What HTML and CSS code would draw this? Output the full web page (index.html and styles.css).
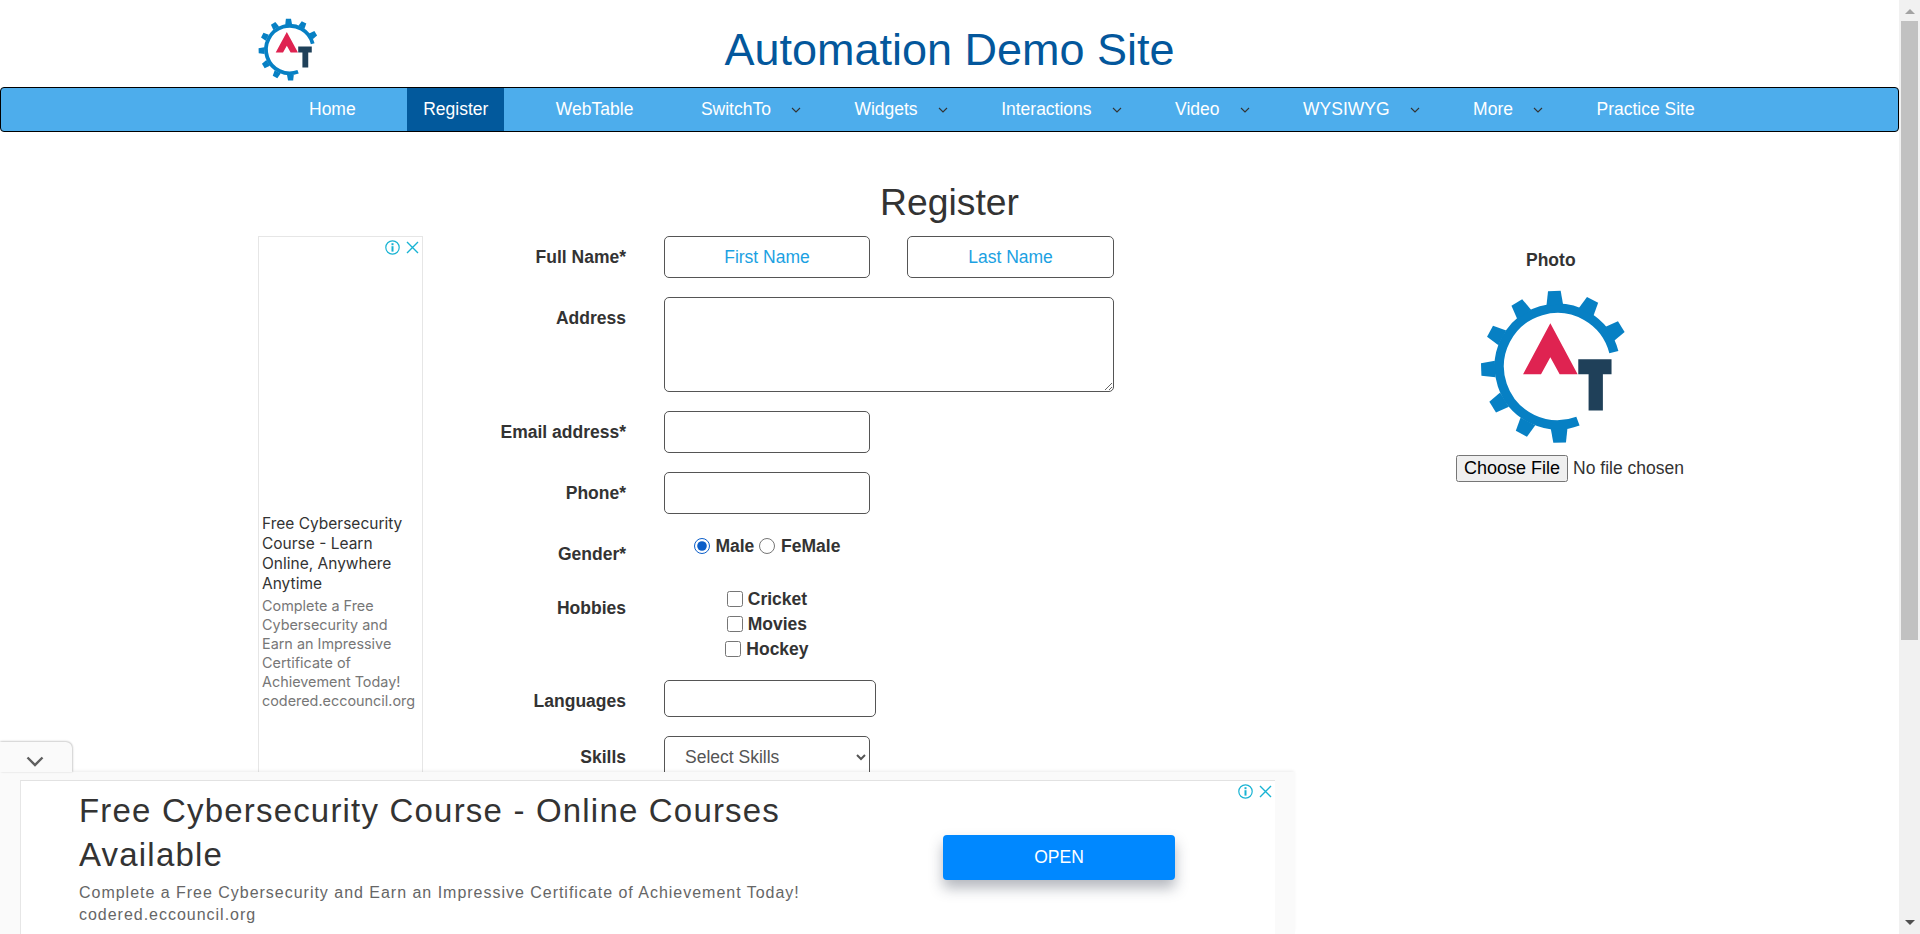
FILE: index.html
```html
<!DOCTYPE html>
<html lang="en">
<head>
<meta charset="utf-8">
<title>Register</title>
<link rel="stylesheet" href="styles.css">
</head>
<body>
<svg class="defs" width="0" height="0" aria-hidden="true">
  <symbol id="gear" viewBox="170 150 450 460">
    <path d="M473 544 A175 175 0 1 1 581 337" fill="none" stroke="#0780c4" stroke-width="28"/>
    <g fill="#0780c4">
      <polygon transform="translate(410 381) rotate(-2)" points="-25,-186 -19,-228 19,-228 25,-186"/>
      <polygon transform="translate(410 381) rotate(28)" points="-25,-186 -19,-228 19,-228 25,-186"/>
      <polygon transform="translate(410 381) rotate(58)" points="-25,-186 -19,-228 19,-228 25,-186"/>
      <polygon transform="translate(410 381) rotate(-32)" points="-25,-186 -19,-228 19,-228 25,-186"/>
      <polygon transform="translate(410 381) rotate(-62)" points="-25,-186 -19,-228 19,-228 25,-186"/>
      <polygon transform="translate(410 381) rotate(-92)" points="-25,-186 -19,-228 19,-228 25,-186"/>
      <polygon transform="translate(410 381) rotate(-122)" points="-25,-186 -19,-228 19,-228 25,-186"/>
      <polygon transform="translate(410 381) rotate(-152)" points="-25,-186 -19,-228 19,-228 25,-186"/>
      <polygon transform="translate(410 381) rotate(178)" points="-25,-186 -19,-228 19,-228 25,-186"/>
    </g>
    <polygon fill="#df2351" points="390,250 308,403 362,403 390,352 418,403 472,403"/>
    <polygon fill="#1f4059" points="474,358 574,358 574,403 548,403 548,512 505,512 505,403 474,403"/>
  </symbol>
  <symbol id="adinfo" viewBox="0 0 15 15">
    <circle cx="7.5" cy="7.5" r="6.7" fill="none" stroke="#18b3d3" stroke-width="1.2"/>
    <rect x="6.5" y="3.2" width="2" height="2" fill="#18b3d3"/>
    <rect x="6.5" y="6.2" width="2" height="5.4" fill="#18b3d3"/>
  </symbol>
  <symbol id="adclose" viewBox="0 0 15 15">
    <path d="M2 2 L13 13 M13 2 L2 13" fill="none" stroke="#18b3d3" stroke-width="1.4"/>
  </symbol>
  <symbol id="caret" viewBox="0 0 10 6">
    <path d="M1 1 L5 5 L9 1" fill="none" stroke="#333" stroke-width="1.1"/>
  </symbol>
</svg>

<div class="window">
  <div class="page">
    <header class="site-header">
      <div class="logo-cell"><svg class="logo-small"><use href="#gear"/></svg></div>
      <h1 class="site-title">Automation Demo Site</h1>
      <div></div>
    </header>

    <nav class="navbar">
      <a class="nav-item">Home</a>
      <a class="nav-item nav-active">Register</a>
      <a class="nav-item">WebTable</a>
      <a class="nav-item">SwitchTo<svg class="caret"><use href="#caret"/></svg></a>
      <a class="nav-item">Widgets<svg class="caret"><use href="#caret"/></svg></a>
      <a class="nav-item">Interactions<svg class="caret"><use href="#caret"/></svg></a>
      <a class="nav-item">Video<svg class="caret"><use href="#caret"/></svg></a>
      <a class="nav-item">WYSIWYG<svg class="caret"><use href="#caret"/></svg></a>
      <a class="nav-item">More<svg class="caret"><use href="#caret"/></svg></a>
      <a class="nav-item">Practice Site</a>
    </nav>

    <h2 class="page-title">Register</h2>

    <div class="content">
      <aside class="side-ad">
        <div class="ad-icons">
          <svg class="ad-icon"><use href="#adinfo"/></svg>
          <svg class="ad-icon"><use href="#adclose"/></svg>
        </div>
        <div class="side-ad-head">Free Cybersecurity Course - Learn Online, Anywhere Anytime</div>
        <div class="side-ad-body side-ad-desc">Complete a Free Cybersecurity and Earn an Impressive Certificate of Achievement Today!</div>
        <div class="side-ad-body">codered.eccouncil.org</div>
      </aside>

      <form class="reg-form">
        <div class="row">
          <label class="row-label">Full Name*</label>
          <div class="pair">
            <input class="field field-half field-first" type="text" placeholder="First Name">
            <input class="field field-half field-second" type="text" placeholder="Last Name">
          </div>
        </div>
        <div class="row">
          <label class="row-label">Address</label>
          <textarea class="field field-area"></textarea>
        </div>
        <div class="row">
          <label class="row-label">Email address*</label>
          <input class="field field-half" type="email">
        </div>
        <div class="row">
          <label class="row-label">Phone*</label>
          <input class="field field-half" type="tel">
        </div>
        <div class="row row-gender">
          <label class="row-label">Gender*</label>
          <div class="choices choices-gender">
            <label class="choice"><input class="mark mark-radio" type="radio" name="gender" checked> Male</label>
            <label class="choice"><input class="mark mark-radio" type="radio" name="gender"> FeMale</label>
          </div>
        </div>
        <div class="row row-hobbies">
          <label class="row-label">Hobbies</label>
          <div class="choices">
            <div class="choice-line"><label class="choice"><input class="mark" type="checkbox"> Cricket</label></div>
            <div class="choice-line"><label class="choice"><input class="mark" type="checkbox"> Movies</label></div>
            <div class="choice-line"><label class="choice"><input class="mark" type="checkbox"> Hockey</label></div>
          </div>
        </div>
        <div class="row">
          <label class="row-label">Languages</label>
          <input class="field field-lang" type="text">
        </div>
        <div class="row">
          <label class="row-label">Skills</label>
          <select class="field field-half field-select"><option>Select Skills</option></select>
        </div>
      </form>

      <section class="photo">
        <div class="photo-label">Photo</div>
        <svg class="logo-large"><use href="#gear"/></svg>
        <input class="file" type="file">
      </section>
    </div>
  </div>

  <aside class="scrollbar">
    <span class="scroll-up"></span>
    <span class="scroll-thumb"></span>
    <span class="scroll-track"></span>
    <span class="scroll-down"></span>
  </aside>

  <div class="anchor-ad">
    <div class="anchor-tab"><svg class="anchor-chevron" viewBox="0 0 18 11"><path d="M1.5 1.5 L9 9 L16.5 1.5" fill="none" stroke="#5f5f5f" stroke-width="2.4"/></svg></div>
    <div class="anchor-inner">
      <div class="ad-icons ad-icons-anchor">
        <svg class="ad-icon"><use href="#adinfo"/></svg>
        <svg class="ad-icon"><use href="#adclose"/></svg>
      </div>
      <div class="anchor-copy">
        <div class="anchor-head">Free Cybersecurity Course - Online Courses Available</div>
        <div class="anchor-body">Complete a Free Cybersecurity and Earn an Impressive Certificate of Achievement Today!</div>
        <div class="anchor-body">codered.eccouncil.org</div>
      </div>
      <div class="anchor-action"><button class="open-btn" type="button">OPEN</button></div>
    </div>
  </div>
</div>
</body>
</html>
```
FILE: styles.css
```css
* { box-sizing: border-box; }
html, body { margin: 0; height: 934px; overflow: hidden; background: #fff; }
body { font-family: "Liberation Sans", Arial, sans-serif; color: #333; }
.defs { position: absolute; }

.window { position: relative; display: flex; height: 934px; }
.page { flex: 1; min-width: 0; height: 934px; overflow: hidden; }

/* header */
.site-header { display: grid; grid-template-columns: 1fr auto 1fr; align-items: center; height: 87px; }
.logo-cell { padding-left: 257px; }
.logo-small { display: block; width: 61px; height: 63px; margin-top: 12px; }
.site-title { margin: 0; font-size: 45px; font-weight: 400; color: #03579c; line-height: 1; padding-top: 12px; }

/* nav */
.navbar { display: flex; gap: 35.5px; height: 45px; padding-left: 292px; border: 1px solid #000; border-radius: 4px; background: #4dadec; }
.nav-item { display: flex; align-items: center; padding: 0 16px; font-size: 17.5px; color: #fff; }
.nav-active { background: #02599c; }
.caret { width: 10px; height: 6px; margin-left: 20px; margin-right: -16px; margin-top: 1px; }
.nav-item:has(.caret) { padding-right: 18px; }

/* heading */
.page-title { margin: 0; height: 104px; padding-top: 46px; text-align: center; font-size: 37.3px; line-height: 48px; font-weight: 400; }

/* content */
.content { display: flex; align-items: flex-start; padding-left: 258px; }

.side-ad { position: relative; flex: none; width: 165px; height: 600px; padding: 277px 3px 0 3px; border: 1px solid #e6e6e6; border-bottom: 0; }
.ad-icons { position: absolute; top: 3px; right: 2px; display: flex; gap: 5px; }
.ad-icon { display: block; width: 15px; height: 15px; }
.side-ad-head { font-family: Inter, sans-serif; font-size: 15.5px; line-height: 20px; color: #333; }
.side-ad-body { font-family: Inter, sans-serif; font-size: 14.4px; line-height: 19px; color: #777; }
.side-ad-desc { margin-top: 2px; }

/* form */
.reg-form { flex: none; width: 720px; }
.row { display: flex; align-items: flex-start; margin-bottom: 19px; }
.row-label { flex: none; width: 203px; margin-right: 38px; padding-top: 9px; text-align: right; font-size: 17.5px; line-height: 24px; font-weight: 700; color: #333; }
.pair { display: flex; gap: 37px; }
.field { display: block; margin: 0; border: 1px solid #555; border-radius: 5px; background: #fff; font-family: inherit; font-size: 17.5px; color: #555; }
.field-half { width: 206px; height: 42px; }
.field-second { width: 207px; }
.field-first, .field-second { text-align: center; }
.field::placeholder { color: #1ba1e2; opacity: 1; }
.field-area { width: 450px; height: 95px; }
.field-lang { width: 212px; height: 37px; }
.field-select { padding-left: 16px; }

.row-gender { height: 35px; }
.row-hobbies { height: 74px; }
.choices { flex: none; width: 206px; text-align: center; font-size: 17.5px; font-weight: 700; color: #333; }
.choices-gender { line-height: 24px; padding-top: 1px; }
.choice-line { height: 25px; line-height: 25px; }
.mark { margin: 0; width: 16px; height: 16px; vertical-align: -2px; accent-color: #0b5ec9; }
.mark-radio { margin-right: 1px; }

/* photo */
.photo { flex: none; display: flex; flex-direction: column; align-items: flex-start; margin-left: 154px; padding-top: 14px; width: 500px; }
.photo-label { margin-left: 229px; font-size: 17.5px; font-weight: 700; line-height: 20px; color: #333; }
.logo-large { display: block; width: 150px; height: 153px; margin: 20px 0 0 180px; }
.file { margin: 12px 0 0 159px; font-family: inherit; font-size: 17.5px; color: #333; }
.file::file-selector-button { font-size: 18px; margin-right: 5px; }

/* scrollbar */
.scrollbar { flex: none; display: flex; flex-direction: column; align-items: center; width: 21px; height: 934px; background: #f1f1f1; }
.scroll-up { flex: none; width: 0; height: 0; margin: 9px 0 5px; border-left: 5px solid transparent; border-right: 5px solid transparent; border-bottom: 5px solid #a3a3a3; }
.scroll-thumb { flex: none; width: 17px; height: 619px; margin-top: 2px; background: #c1c1c1; }
.scroll-track { flex: 1; }
.scroll-down { flex: none; width: 0; height: 0; margin: 0 0 9px; border-left: 5px solid transparent; border-right: 5px solid transparent; border-top: 5px solid #505050; }

/* anchored ad */
.anchor-ad { position: absolute; left: 0; top: 772px; width: 1295px; height: 162px; padding: 8px 20px 0 20px; background: #fafafa; box-shadow: 0 -2px 3px -1px rgba(0,0,0,.08); }
.anchor-tab { position: absolute; left: 0; top: -30px; display: flex; justify-content: center; align-items: center; width: 72px; height: 30px; background: #fafafa; border-radius: 0 6px 0 0; box-shadow: 0 -1px 2px rgba(0,0,0,.15), 1px 0 2px rgba(0,0,0,.15); padding: 8px 2px 0 0; }
.anchor-chevron { display: block; width: 18px; height: 11px; }
.anchor-inner { position: relative; display: flex; height: 154px; background: #fff; border-top: 1px solid #e2e2e2; border-left: 1px solid #e6e6e6; }
.ad-icons-anchor { top: 3px; right: 2px; }
.anchor-copy { flex: none; width: 730px; margin-left: 58px; padding-top: 8px; }
.anchor-head { font-size: 33px; line-height: 44px; letter-spacing: 1.19px; color: #333; margin-bottom: 5px; }
.anchor-body { font-size: 16px; line-height: 22px; letter-spacing: .98px; color: #666; }
.anchor-action { margin-left: 134px; padding-top: 54px; }
.open-btn { display: block; width: 232px; height: 45px; border: 0; border-radius: 4px; background: #0088ff; color: #fff; font-family: inherit; font-size: 17.5px; box-shadow: 0 8px 14px rgba(40,50,70,.35); }
```
